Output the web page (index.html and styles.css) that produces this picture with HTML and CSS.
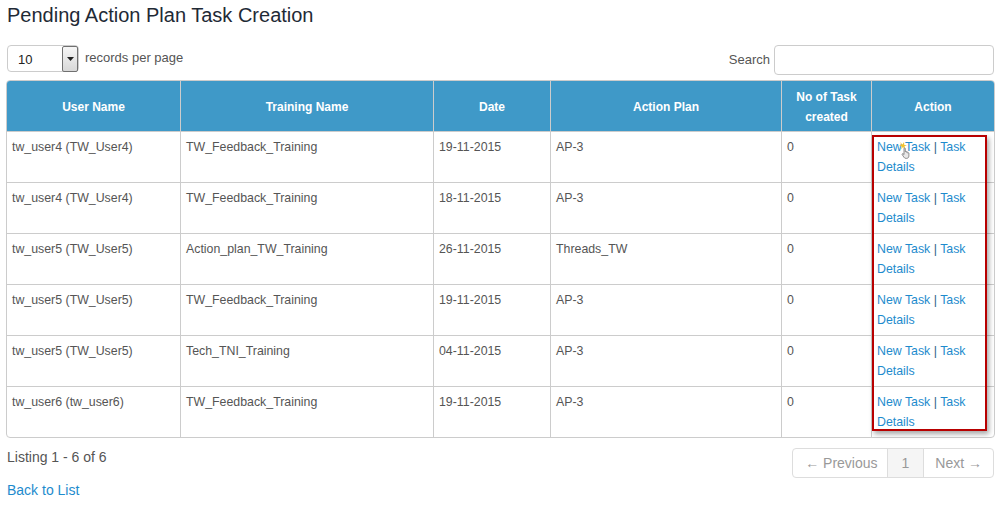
FILE: index.html
```html
<!DOCTYPE html>
<html>
<head>
<meta charset="utf-8">
<link rel="stylesheet" href="styles.css">
</head>
<body>
<div class="page">
  <h1 class="title">Pending Action Plan Task Creation</h1>
  <div class="toolbar">
    <div class="length">
      <div class="select"><span class="select-val">10</span><span class="select-btn"><svg width="7" height="4" viewBox="0 0 7 4"><path d="M0 0h7L3.5 4z" fill="#222"/></svg></span></div>
      <span class="length-label">records per page</span>
    </div>
    <div class="search">
      <label class="search-label">Search</label>
      <div class="search-input"></div>
    </div>
  </div>
  <div class="table-wrap">
    <table class="grid">
      <colgroup>
        <col style="width:173px"><col style="width:253px"><col style="width:117px"><col style="width:231px"><col style="width:90px"><col style="width:123px">
      </colgroup>
      <thead>
        <tr><th>User Name</th><th>Training Name</th><th>Date</th><th>Action Plan</th><th>No of Task created</th><th>Action</th></tr>
      </thead>
      <tbody>
        <tr><td>tw_user4 (TW_User4)</td><td>TW_Feedback_Training</td><td>19-11-2015</td><td>AP-3</td><td>0</td><td><a class="lnk">New Task</a> <span class="sep">|</span> <a class="lnk">Task Details</a></td></tr>
        <tr><td>tw_user4 (TW_User4)</td><td>TW_Feedback_Training</td><td>18-11-2015</td><td>AP-3</td><td>0</td><td><a class="lnk">New Task</a> <span class="sep">|</span> <a class="lnk">Task Details</a></td></tr>
        <tr><td>tw_user5 (TW_User5)</td><td>Action_plan_TW_Training</td><td>26-11-2015</td><td>Threads_TW</td><td>0</td><td><a class="lnk">New Task</a> <span class="sep">|</span> <a class="lnk">Task Details</a></td></tr>
        <tr><td>tw_user5 (TW_User5)</td><td>TW_Feedback_Training</td><td>19-11-2015</td><td>AP-3</td><td>0</td><td><a class="lnk">New Task</a> <span class="sep">|</span> <a class="lnk">Task Details</a></td></tr>
        <tr><td>tw_user5 (TW_User5)</td><td>Tech_TNI_Training</td><td>04-11-2015</td><td>AP-3</td><td>0</td><td><a class="lnk">New Task</a> <span class="sep">|</span> <a class="lnk">Task Details</a></td></tr>
        <tr><td>tw_user6 (tw_user6)</td><td>TW_Feedback_Training</td><td>19-11-2015</td><td>AP-3</td><td>0</td><td><a class="lnk">New Task</a> <span class="sep">|</span> <a class="lnk">Task Details</a></td></tr>
      </tbody>
    </table>
    <div class="highlight"></div>
    <svg class="cursor" width="16" height="18" viewBox="0 0 16 18">
      <path d="M2 1l1.5 3L1 4.5l2.8 1L3 8.5 5 6l2 2.5L6.5 5.3 9 4.3 6.3 4 6 1 4.5 3.5z" fill="#f2c230"/>
      <path d="M6 7.5c0-.8 1.3-.8 1.3 0v3.2c.2-.7 1.3-.6 1.3.1v.5c.2-.6 1.2-.5 1.2.2v.6c.3-.5 1.1-.3 1.1.3v2.6c0 1.4-1 2.4-2.4 2.4H8c-1 0-1.6-.5-2.1-1.2L4.2 13.6c-.4-.6.4-1.3 1-.8l.8.8z" fill="#e8e8e8" stroke="#666" stroke-width=".7"/>
    </svg>
  </div>
  <div class="footer">
    <div class="listing">Listing 1 - 6 of 6</div>
    <div class="pager">
      <span class="pg">← Previous</span><span class="pg active">1</span><span class="pg">Next →</span>
    </div>
  </div>
  <a class="back">Back to List</a>
</div>
</body>
</html>
```
FILE: styles.css
```css
html, body {
  margin: 0;
  padding: 0;
  background: #fff;
}
body {
  font-family: "Liberation Sans", Arial, sans-serif;
  color: #555;
}
.page {
  padding: 0 10px 0 6px;
}
.title {
  margin: 0 0 0 1px;
  padding-top: 3px;
  font-size: 20px;
  font-weight: normal;
  line-height: 24px;
  color: #1f2a36;
}
.toolbar {
  display: flex;
  justify-content: space-between;
  align-items: flex-start;
  margin-top: 18px;
  margin-left: 1px;
  height: 35px;
}
.length {
  display: flex;
  align-items: center;
  height: 27px;
}
.select {
  width: 70px;
  height: 25px;
  border: 1px solid #ccc;
  border-radius: 4px;
  display: flex;
  justify-content: space-between;
  align-items: stretch;
  background: #fff;
}
.select-val {
  font-size: 13px;
  color: #222;
  line-height: 27px;
  padding-left: 10px;
}
.select-btn {
  width: 14px;
  margin: 0 0 -1px 0;
  border: 1px solid #707070;
  border-radius: 2px;
  background: linear-gradient(#f6f6f6, #d8d8d8);
  display: flex;
  align-items: center;
  justify-content: center;
}
.length-label {
  font-size: 13px;
  margin-left: 6px;
  margin-top: -2px;
}
.search {
  display: flex;
  align-items: center;
}
.search-label {
  font-size: 13px;
  margin-right: 4px;
  margin-top: -2px;
}
.search-input {
  width: 218px;
  height: 28px;
  border: 1px solid #ccc;
  border-radius: 4px;
}
.table-wrap {
  position: relative;
}
.grid {
  width: 988px;
  table-layout: fixed;
  border-collapse: separate;
  border-spacing: 0;
  border: 1px solid #ccc;
  border-radius: 4px;
  font-size: 12.35px;
}
.grid th {
  background: #3f99c8;
  color: #fff;
  font-size: 12px;
  font-weight: bold;
  height: 41px;
  padding: 5px 5px 4px;
  line-height: 20px;
  text-align: center;
  vertical-align: middle;
  border-left: 1px solid #ccc;
}
.grid th:first-child, .grid td:first-child {
  border-left: none;
}
.grid thead tr th:first-child { border-top-left-radius: 3px; }
.grid thead tr th:last-child { border-top-right-radius: 3px; }
.grid td {
  border-top: 1px solid #ccc;
  border-left: 1px solid #ccc;
  padding: 5px 5px 5px;
  height: 40px;
  line-height: 20px;
  vertical-align: top;
  color: #555;
}
.lnk {
  color: #1e8bcd;
  cursor: pointer;
}
.sep {
  color: #2a5f8a;
}
.highlight {
  position: absolute;
  left: 866px;
  top: 55px;
  width: 111px;
  height: 292px;
  border: 2px solid #b80000;
  box-shadow: 2px 3px 5px rgba(0,0,0,0.35);
  pointer-events: none;
}
.cursor {
  position: absolute;
  left: 892px;
  top: 61px;
}
.footer {
  display: flex;
  justify-content: space-between;
  align-items: flex-start;
  margin-top: 9px;
  margin-left: 1px;
  height: 33px;
}
.listing {
  font-size: 14px;
  line-height: 20px;
}
.pager {
  display: flex;
  border: 1px solid #ddd;
  border-radius: 4px;
  height: 28px;
  margin-top: 1px;
  font-size: 14px;
  color: #999;
}
.pg {
  line-height: 28px;
  padding: 0 11px;
  border-left: 1px solid #ddd;
}
.pg:first-child {
  border-left: none;
  padding: 0 9px 0 12px;
}
.pg.active {
  background: #f5f5f5;
  padding: 0 14px;
}
.back {
  display: inline-block;
  margin-left: 1px;
  font-size: 14px;
  line-height: 20px;
  color: #1e8bcd;
  cursor: pointer;
}
```
